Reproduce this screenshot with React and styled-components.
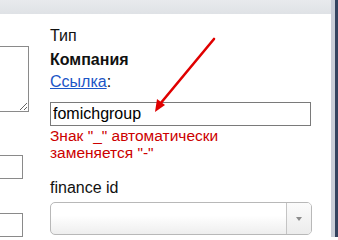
import styled, { createGlobalStyle } from 'styled-components';

const GlobalStyle = createGlobalStyle`
    html, body {
        margin: 0;
        padding: 0;
        background: #ffffff;
        font-family: "Liberation Sans", Arial, sans-serif;
        overflow: hidden;
    }
`;

const Page = styled.div`
    position: relative;
    display: flex;
    width: 338px;
    height: 237px;
    overflow: hidden;
`;

const Main = styled.div`
    display: flex;
    flex-direction: column;
    width: 331px;
`;

const TopBand = styled.div`
    height: 15px;
    background: linear-gradient(#e8eaed, #dfe2e6);
`;

const Body = styled.div`
    display: flex;
`;

const LeftCol = styled.div`
    width: 29px;
    overflow: hidden;
    display: flex;
    flex-direction: column;
    align-items: flex-end;
    padding-top: 32px;
`;

const Area = styled.textarea`
    flex: none;
    width: 120px;
    height: 66px;
    box-sizing: border-box;
    border: 1px solid #8a8a8a;
    margin: 0;
    resize: both;
    background: #fff;
`;

const SideInput = styled.div`
    flex: none;
    width: 100px;
    height: 24px;
    box-sizing: border-box;
    border: 1px solid #8a8a8a;
    margin-right: 6px;
    margin-top: ${(p) => p.$gap}px;
`;

const RightCol = styled.div`
    display: flex;
    flex-direction: column;
    margin-left: 21px;
    padding-top: 13px;
    width: 262px;
`;

const Label = styled.div`
    font-size: 16px;
    line-height: 18px;
    color: #111;
    margin-top: ${(p) => p.$gap || 0}px;
    font-weight: ${(p) => (p.$bold ? 700 : 400)};
`;

const LinkText = styled.a`
    color: #1b55c7;
    text-decoration: underline;
`;

const TextInput = styled.input`
    width: 261px;
    height: 24px;
    box-sizing: border-box;
    margin-top: 11px;
    padding: 0 2px;
    border: 1px solid #7a7a7a;
    font-family: "Liberation Sans", Arial, sans-serif;
    font-size: 16px;
    line-height: 22px;
    color: #000;
    outline: none;
`;

const Hint = styled.div`
    margin-top: 1px;
    font-size: 15.5px;
    line-height: 17px;
    color: #cc0000;
`;

const Select = styled.div`
    display: flex;
    margin-top: 5px;
    width: 262px;
    height: 33px;
    box-sizing: border-box;
    border: 1px solid #b8b8b8;
    border-radius: 5px;
    background: linear-gradient(#ffffff 40%, #eeeeee);
    overflow: hidden;
`;

const SelectValue = styled.div`
    flex: 1;
`;

const SelectButton = styled.div`
    width: 24px;
    border-left: 1px solid #c4c4c4;
    display: flex;
    align-items: center;
    justify-content: center;
    background: linear-gradient(#fbfbfb, #ececec);
`;

const Caret = styled.div`
    width: 0;
    height: 0;
    border-left: 3px solid transparent;
    border-right: 3px solid transparent;
    border-top: 4px solid #8c8c8c;
    margin-top: 1px;
`;

const Scroll = styled.div`
    display: flex;
    width: 7px;
`;

const ScrollLight = styled.div`
    width: 4px;
    background: #c9ced8;
`;

const ScrollDark = styled.div`
    width: 3px;
    background: #34435f;
`;

const ArrowLayer = styled.svg`
    position: absolute;
    left: 0;
    top: 0;
    pointer-events: none;
`;

function App() {
    return (
        <Page>
            <GlobalStyle />
            <Main>
                <TopBand />
                <Body>
                    <LeftCol>
                        <Area readOnly />
                        <SideInput $gap={43} />
                        <SideInput $gap={34} />
                    </LeftCol>
                    <RightCol>
                        <Label>Тип</Label>
                        <Label $bold $gap={6}>
                            Компания
                        </Label>
                        <Label $gap={4}>
                            <LinkText href="#">Ссылка</LinkText>:
                        </Label>
                        <TextInput defaultValue="fomichgroup" />
                        <Hint>
                            Знак "_" автоматически
                            <br />
                            заменяется "-"
                        </Hint>
                        <Label $gap={18}>finance id</Label>
                        <Select>
                            <SelectValue />
                            <SelectButton>
                                <Caret />
                            </SelectButton>
                        </Select>
                    </RightCol>
                </Body>
            </Main>
            <Scroll>
                <ScrollLight />
                <ScrollDark />
            </Scroll>
            {/* red pointer arrow drawn over the form */}
            <ArrowLayer width="338" height="237">
                <line x1="214" y1="39" x2="160" y2="104" stroke="#e00000" strokeWidth="2.6" strokeLinecap="round" />
                <polygon points="155,112 157,99 165,105" fill="#e00000" />
            </ArrowLayer>
        </Page>
    );
}

export default App;
